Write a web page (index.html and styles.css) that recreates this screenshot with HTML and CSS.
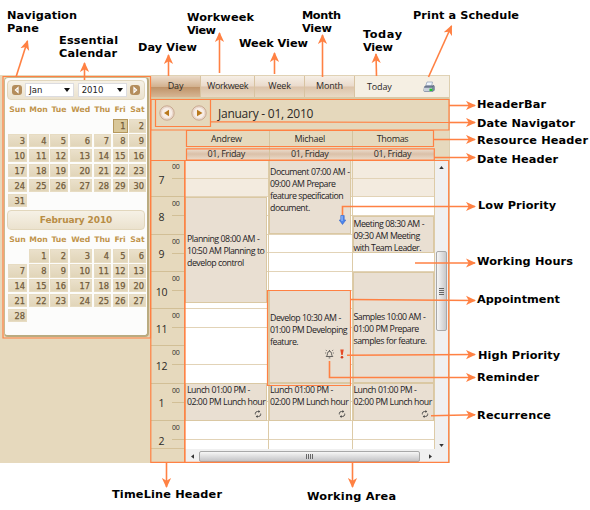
FILE: index.html
```html
<!DOCTYPE html>
<html lang="en">
<head>
<meta charset="utf-8">
<title>Schedule</title>
<link rel="stylesheet" href="styles.css">
</head>
<body>
<div class="figure">
<main class="app">
  <aside class="side">
    <div class="calendar">
      <div class="cal-head">
        <svg class="round" viewBox="0 0 10 10"><rect width="10" height="10" rx="3" fill="#b48d5c"/><path d="M6 2.6 3.4 5 6 7.4z" fill="none" stroke="#fff" stroke-width="1.2"/></svg>
        <span class="select">Jan<i></i></span>
        <span class="select">2010<i></i></span>
        <svg class="round" viewBox="0 0 10 10"><rect width="10" height="10" rx="3" fill="#b48d5c"/><path d="M4 2.6 6.6 5 4 7.4z" fill="none" stroke="#fff" stroke-width="1.2"/></svg>
      </div>
      <div class="names"><b>Sun</b><b>Mon</b><b>Tue</b><b>Wed</b><b>Thu</b><b>Fri</b><b>Sat</b></div>
      <div class="days">
        <span class="first-fri today">1</span><span>2</span>
        <span>3</span><span>4</span><span>5</span><span>6</span><span>7</span><span>8</span><span>9</span>
        <span>10</span><span>11</span><span>12</span><span>13</span><span>14</span><span>15</span><span>16</span>
        <span>17</span><span>18</span><span>19</span><span>20</span><span>21</span><span>22</span><span>23</span>
        <span>24</span><span>25</span><span>26</span><span>27</span><span>28</span><span>29</span><span>30</span>
        <span>31</span>
      </div>
      <div class="cal-head title">February 2010</div>
      <div class="names feb"><b>Sun</b><b>Mon</b><b>Tue</b><b>Wed</b><b>Thu</b><b>Fri</b><b>Sat</b></div>
      <div class="days">
        <span class="first-mon">1</span><span>2</span><span>3</span><span>4</span><span>5</span><span>6</span>
        <span>7</span><span>8</span><span>9</span><span>10</span><span>11</span><span>12</span><span>13</span>
        <span>14</span><span>15</span><span>16</span><span>17</span><span>18</span><span>19</span><span>20</span>
        <span>21</span><span>22</span><span>23</span><span>24</span><span>25</span><span>26</span><span>27</span>
        <span>28</span>
      </div>
    </div>
  </aside>
  <section class="schedule">
    <nav class="tabs">
      <span class="tab active">Day</span><span class="tab">Workweek</span><span class="tab">Week</span><span class="tab">Month</span>
      <span class="tools"><span class="now">Today</span>
        <svg class="printer" viewBox="0 0 12 12"><path d="M4 1h5.5L8.5 5.500H2.500z" fill="#eef4fc" stroke="#8c9cb4" stroke-width=".7"/><path d="M1 6 3 4.200h8l.8 1.300v3.800L9.500 11H1.500L.4 9.800z" fill="#7d899e"/><path d="M1 6.500h8v3.800H1z" fill="#c9d0dc"/><path d="M1.200 6h7.800l2-1.600" fill="none" stroke="#56617a" stroke-width=".8"/><path d="M6.500 7.700h2.800v2.300H6.500z" fill="#20c828"/></svg>
      </span>
    </nav>
    <header class="bar">
      <span class="nav">
        <svg viewBox="0 0 16 16"><circle cx="8" cy="8" r="7.200" fill="#ead8cc" stroke="#c9a990"/><circle cx="8" cy="8" r="5.200" fill="#f8eee7"/><path d="M10 4.700v6.600L5 8z" fill="#b9791d"/></svg>
        <svg viewBox="0 0 16 16"><circle cx="8" cy="8" r="7.200" fill="#ead8cc" stroke="#c9a990"/><circle cx="8" cy="8" r="5.200" fill="#f8eee7"/><path d="M6 4.700v6.600L11.500 8z" fill="#b9791d"/></svg>
      </span>
      <span class="date">January - 01, 2010</span>
    </header>
    <div class="resources"><span>Andrew</span><span>Michael</span><span>Thomas</span></div>
    <div class="dates"><span>01, Friday</span><span>01, Friday</span><span>01, Friday</span></div>
    <div class="body">
      <div class="times">
        <div><b>7</b><i>00</i></div><div><b>8</b><i>00</i></div><div><b>9</b><i>00</i></div><div><b>10</b><i>00</i></div><div><b>11</b><i>00</i></div><div><b>12</b><i>00</i></div><div><b>1</b><i>00</i></div><div><b>2</b><i>00</i></div>
      </div>
      <div class="work">
        <div class="view">
          <div class="col">
            <div class="appt planning">Planning 08:00 AM -<br>10:50 AM Planning to<br>develop control</div>
            <div class="appt lunch">Lunch 01:00 PM -<br>02:00 PM Lunch hour<svg class="recur" viewBox="0 0 9 9"><path d="M1.500 5V3.700Q1.700 1.700 4 1.700H5.500M7.500 4v1.300Q7.300 7.300 5 7.300H3.500" fill="none" stroke="#444" stroke-width="1"/><path d="M5 0 7 1.700 5 3.400zM4 5.600 2 7.300 4 9z" fill="#444"/></svg></div>
          </div>
          <div class="col">
            <div class="appt document">Document 07:00 AM -<br>09:00 AM Prepare<br>feature specification<br>document.<svg class="low" viewBox="0 0 7 10"><path d="M1.800.500h3.400V5h1.600L3.500 9.500.200 5h1.600z" fill="#4c86ec" stroke="#3563c8" stroke-width=".6"/><path d="M3 1v5" stroke="#a9c8ff"/></svg></div>
            <div class="appt develop">Develop 10:30 AM -<br>01:00 PM Developing<br>feature.<span class="marks"><svg class="bell" viewBox="0 0 9 10"><path d="M1.200 7.500Q2.500 6.500 2.500 4.500 2.500 2.500 4.500 2.300 6.500 2.500 6.500 4.500 6.500 6.500 7.800 7.500zM3.700 8.900h1.600M4.500 2.300V1M1.700 1.800.800.900M7.300 1.800l.9-.9M.2 4h1M7.800 4h1" fill="none" stroke="#444" stroke-width=".8"/></svg><svg class="high" viewBox="0 0 4 10"><path d="M.300.500h3.400L2.700 6H1.300z" fill="#e64a25"/><circle cx="2" cy="8.300" r="1.300" fill="#d43a1a"/></svg></span></div>
            <div class="appt lunch">Lunch 01:00 PM -<br>02:00 PM Lunch hour<svg class="recur" viewBox="0 0 9 9"><path d="M1.500 5V3.700Q1.700 1.700 4 1.700H5.500M7.500 4v1.300Q7.300 7.300 5 7.300H3.500" fill="none" stroke="#444" stroke-width="1"/><path d="M5 0 7 1.700 5 3.400zM4 5.600 2 7.300 4 9z" fill="#444"/></svg></div>
          </div>
          <div class="col">
            <div class="appt meeting">Meeting 08:30 AM -<br>09:30 AM Meeting<br>with Team Leader.</div>
            <div class="appt samples">Samples 10:00 AM -<br>01:00 PM Prepare<br>samples for feature.</div>
            <div class="appt lunch">Lunch 01:00 PM -<br>02:00 PM Lunch hour<svg class="recur" viewBox="0 0 9 9"><path d="M1.500 5V3.700Q1.700 1.700 4 1.700H5.500M7.500 4v1.300Q7.300 7.300 5 7.300H3.500" fill="none" stroke="#444" stroke-width="1"/><path d="M5 0 7 1.700 5 3.400zM4 5.600 2 7.300 4 9z" fill="#444"/></svg></div>
          </div>
          <div class="vbar">
            <svg class="tip" viewBox="0 0 6 4"><path d="M0 4 3 0 6 4z" fill="#333"/></svg>
            <span class="vthumb"><svg viewBox="0 0 5 7"><path d="M0 .5h5M0 2.500h5M0 4.500h5M0 6.500h5" stroke="#666"/></svg></span>
            <svg class="tip" viewBox="0 0 6 4"><path d="M0 0 3 4 6 0z" fill="#333"/></svg>
          </div>
        </div>
        <div class="hbar">
          <svg class="side-tip" viewBox="0 0 4 6"><path d="M4 0 0 3 4 6z" fill="#333"/></svg>
          <span class="hthumb"><svg viewBox="0 0 7 5"><path d="M.5 0v5M2.500 0v5M4.500 0v5M6.500 0v5" stroke="#666"/></svg></span>
          <svg class="side-tip" viewBox="0 0 4 6"><path d="M0 0 4 3 0 6z" fill="#333"/></svg>
        </div>
      </div>
    </div>
  </section>
</main>

<svg class="notes" viewBox="0 0 590 510" width="590" height="510">
  <defs>
    <marker id="head" markerUnits="userSpaceOnUse" markerWidth="11" markerHeight="10" refX="9" refY="5" orient="auto"><path d="M0 .400 10 5 0 9.600 2.700 5z" fill="#ff8143"/></marker>
  </defs>
  <g class="frames">
    <path d="M3 76.500H150.500V338H3z"/>
    <path d="M151 99.500H449V130H151z"/>
    <path d="M155.500 99.500H210.500V126.500H155.500z"/>
    <path d="M186.500 130.500H433.500V146.500H186.500z"/>
    <path d="M186.500 148.800H434.300V160H186.500z"/>
    <path d="M150.800 130V462.300H184.800V160.500H150.800"/>
    <path d="M184.800 160.500H448.700V462.300H184.800z"/>
    <path d="M267.500 290.500H350.500V385.500H267.500z"/>
    <path d="M210 121.800 449 122.500"/>
  </g>
  <g class="arrows">
    <path d="M16 77 27.500 41"/><path d="M84.500 80V63"/><path d="M168.500 76V55"/><path d="M219.500 73V33"/>
    <path d="M274.500 74V53"/><path d="M322.500 77V35"/><path d="M376.500 76 376 54"/><path d="M428.500 77 451.500 26"/>
    <path d="M449 105.500H475"/><path d="M449 122.500H475"/><path d="M433 139.500H475"/><path d="M434 157.500H475"/>
    <path d="M342.500 215V206.500H475"/><path d="M415 263H475"/><path d="M350.500 299.500 475 300.500"/><path d="M347 355.300 475 354.500"/>
    <path d="M329.500 361V377.500H475"/><path d="M431 415.700 475 414.800"/><path d="M166.500 462V487"/><path d="M352.500 462V487"/>
  </g>
  <g class="labels">
    <text x="7" y="19" textLength="70">Navigation</text><text x="7" y="32" textLength="32">Pane</text>
    <text x="59" y="44" textLength="59">Essential</text><text x="59" y="57" textLength="58">Calendar</text>
    <text x="138" y="51" textLength="59">Day View</text>
    <text x="187" y="21" textLength="67">Workweek</text><text x="187" y="34" textLength="29">View</text>
    <text x="239" y="47" textLength="69">Week View</text>
    <text x="302" y="19" textLength="39">Month</text><text x="302" y="32" textLength="30">View</text>
    <text x="363" y="38" textLength="39">Today</text><text x="363" y="51" textLength="30">View</text>
    <text x="413" y="19" textLength="106">Print a Schedule</text>
    <text x="477" y="108" textLength="69">HeaderBar</text>
    <text x="477" y="127" textLength="98">Date Navigator</text>
    <text x="477" y="144" textLength="111">Resource Header</text>
    <text x="477" y="163" textLength="81">Date Header</text>
    <text x="478" y="209" textLength="78">Low Priority</text>
    <text x="477" y="265" textLength="96">Working Hours</text>
    <text x="477" y="303" textLength="83">Appointment</text>
    <text x="478" y="359" textLength="82">High Priority</text>
    <text x="477" y="381" textLength="62">Reminder</text>
    <text x="477" y="419" textLength="74">Recurrence</text>
    <text x="112" y="498" textLength="110">TimeLine Header</text>
    <text x="307" y="500" textLength="89">Working Area</text>
  </g>
</svg>
</div>
</body>
</html>
```
FILE: styles.css
```css
* { box-sizing: border-box; }
body { margin: 0; background: #fff; overflow: hidden; }
.figure { position: relative; width: 590px; height: 510px; padding-top: 75px; }
svg { display: block; flex: none; }
i { font-style: normal; }

.app { display: flex; width: 450px; height: 388px; background: #e6d9bd; color: #2c2926; font: 9px/12px "Open Sans", sans-serif; letter-spacing: -.15px; }
.side { width: 151px; padding: 2px 2px 0 4px; }
.calendar { height: 260px; padding: 2px; border: 1px solid #c9b98f; border-right: 2px solid #b9ab80; border-bottom: 2px solid #b9ab80; border-radius: 4px; background: #fcfcfb; font-family: "DejaVu Sans", sans-serif; letter-spacing: 0; }
.cal-head { display: flex; align-items: center; justify-content: space-between; height: 20px; padding: 0 4px; border: 1px solid #e2d7bd; border-radius: 4px; background: linear-gradient(#f6f1e6, #ebe2ce); }
.round { width: 10px; height: 10px; }
.select { display: flex; align-items: center; justify-content: space-between; width: 49px; height: 14px; padding: 0 3px; background: #fff; border: 1px solid #dcdce0; font-size: 8.500px; line-height: 12px; color: #222; }
.select i { border: 3px solid transparent; border-top: 4px solid #111; border-bottom: 0; }
.names, .days { display: grid; grid-template-columns: 19px 20px 18px 22.500px 17.500px 15px 17px; column-gap: 1.500px; padding-left: 1px; }
.names { height: 19px; align-items: center; text-align: center; font-size: 7.700px; line-height: 10px; color: #c1944b; }
.names b { margin: 0 -2px; }
.days { grid-auto-rows: 13.500px; row-gap: 1.430px; font-size: 8.300px; line-height: 12px; text-align: right; color: #715b3a; -webkit-text-stroke: .25px #715b3a; }
.days span { padding-right: 1px; border: 1px solid #e7dcc2; background: linear-gradient(#eae0ca, #e1d5b9); }
.days .today { border-color: #b5985d; background: #d9c799; }
.first-fri { grid-column: 6; }
.first-mon { grid-column: 2; }
.title { margin-top: 3px; justify-content: center; font-size: 9px; font-weight: bold; letter-spacing: -.1px; color: #b98d45; }

.schedule { width: 299px; border-right: 1px solid #ddcfb0; }
.tabs { display: flex; height: 22px; border-top: 1px solid #e0d2b5; line-height: 20px; }
.tab { width: 50px; text-align: center; border-right: 1px solid #d8c3a1; background: linear-gradient(#f6efe6, #eadacb 48%, #dcc3aa 52%, #e9dac5); }
.tab:nth-child(2) { width: 54px; letter-spacing: -.35px; }
.tab.active { background: linear-gradient(#ecdccb, #d3b290 50%, #bf9369 54%, #d6b694); }
.tools { display: flex; flex: 1; align-items: center; justify-content: space-between; padding: 0 14px 0 12px; background: #f5efe3; }
.printer { width: 12px; height: 12px; }
.bar { display: flex; align-items: center; height: 33px; padding-bottom: 4px; border-top: 2px solid #d9c9a6; background: #e5d8bc; }
.nav { display: flex; gap: 16px; width: 67px; padding-left: 8px; }
.nav svg { width: 16px; height: 16px; }
.date { padding-top: 3px; font-size: 12px; line-height: 16px; letter-spacing: -.25px; white-space: nowrap; }
.resources, .dates { display: grid; grid-template-columns: 82.500px 83.500px 82px; padding-left: 35px; text-align: center; }
.resources { height: 18px; line-height: 17px; }
.resources, .dates { letter-spacing: -.3px; }
.resources span + span, .dates span + span { border-left: 1px solid #d5c39e; }
.resources span, .dates span { padding-right: 2px; }
.dates { height: 12px; line-height: 12px; }
.dates span { background: linear-gradient(#f0e3d5, #dac0a8 50%, #ecdccb); }
.body { display: flex; height: 303px; }
.times { width: 34px; overflow: hidden; display: grid; grid-auto-rows: 37.300px; height: 289px; border-bottom: 1px solid #d5c199; }
.times div { display: grid; grid-template-columns: 21px 12px; column-gap: 0; border-bottom: 1px solid #d2bf96; background: linear-gradient(#d2bf96, #d2bf96) 21px 18px / 13px 1px no-repeat; }
.times b { align-self: center; text-align: center; font-weight: normal; font-size: 10.500px; line-height: 14px; padding-top: 3px; }
.times i { font-size: 7px; line-height: 10px; padding-top: 2px; letter-spacing: -.3px; }
.work { width: 264px; }
.view { display: grid; grid-template-columns: 84px 83.500px 82.500px 13px; height: 289px; overflow: hidden; }
.col { display: grid; grid-template-rows: repeat(47, 6.217px); border-right: 1px solid #ddcba7; background: repeating-linear-gradient(transparent 0 17.650px, #e2d3b7 17.650px 18.650px), linear-gradient(#f3ebdf 37.300px, #fff 37.300px); }
.appt { position: relative; width: 81.500px; padding-left: 1px; border: 1px solid #dac8a3; background: #e9dfd2; font-size: 8.800px; line-height: 12px; letter-spacing: -.5px; word-spacing: .2px; white-space: nowrap; color: #24211e; }
.col + .col .appt { padding-left: 0; }
.planning { grid-row: 7 / 24; padding-top: 35px; }
.lunch { grid-row: 37 / 43; }
.document { grid-row: 1 / 13; padding-top: 6px; border-top: 0; }
.develop { grid-row: 22 / 37; padding-top: 21px; }
.meeting { grid-row: 10 / 16; padding-top: 1px; }
.samples { grid-row: 19 / 37; padding-top: 38px; }
.recur { position: absolute; right: 4px; bottom: 2px; width: 8px; height: 8px; }
.low { position: absolute; right: 4px; bottom: 8px; width: 7px; height: 10px; }
.marks { position: absolute; right: 6px; bottom: 23px; display: flex; align-items: center; gap: 6px; }
.bell { width: 9px; height: 10px; }
.high { width: 4px; height: 10px; }
.vbar { display: flex; flex-direction: column; align-items: center; padding: 6px 0 5px; background: #f0f0f0; }
.tip { width: 5px; height: 3px; }
.vthumb { display: grid; place-items: center; width: 11px; height: 80px; margin: 82px 0 auto; border: 1px solid #a8a8a8; border-radius: 2px; background: linear-gradient(90deg, #f6f6f6, #c9c9cb); }
.vthumb svg { width: 5px; height: 7px; }
.hbar { display: flex; align-items: center; height: 14px; padding: 0 17px 0 6px; background: #f0f0f0; }
.side-tip { width: 3px; height: 5px; }
.hthumb { display: grid; place-items: center; width: 221px; height: 11px; margin: 0 auto 0 5px; border: 1px solid #a8a8a8; border-radius: 2px; background: linear-gradient(#f6f6f6, #c4c4c6); }
.hthumb svg { width: 7px; height: 5px; }

.notes { position: absolute; left: 0; top: 0; }
.frames { fill: none; stroke: #ff8143; stroke-width: 1.200; }
.arrows path { fill: none; stroke: #ff8143; stroke-width: 1.600; marker-end: url(#head); }
.labels { font: bold 11.300px "DejaVu Sans", sans-serif; fill: #000; }
```
